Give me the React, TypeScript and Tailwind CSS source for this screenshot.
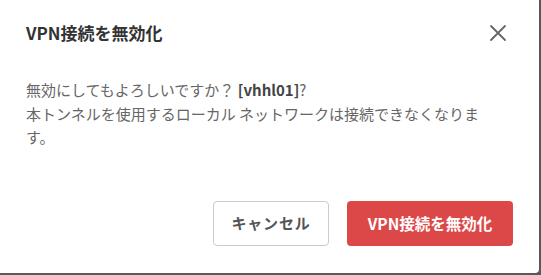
export default function App() {
  return (
    <div className="w-[541px] h-[275px] bg-[#595959] overflow-hidden" style={{ fontFamily: '"Noto Sans CJK JP", "Noto Sans", sans-serif' }}>
      <div className="w-[539px] h-[273px] bg-white rounded-br-[4px] flex flex-col">
        <div className="flex items-center justify-between pl-[26px] pr-[32px] pt-[21px] h-[45px]">
          <h1 className="text-[17px] font-bold text-[#333333] leading-[24px]">VPN接続を無効化</h1>
          <button className="text-[#666666] w-[18px] h-[18px] flex items-center justify-center">
            <svg width="18" height="18" viewBox="0 0 18 18" fill="none" stroke="currentColor" strokeWidth="1.8" strokeLinecap="round">
              <path d="M2 2 L16 16 M16 2 L2 16" />
            </svg>
          </button>
        </div>
        <div className="pl-[26px] w-[495px] pt-[33px] text-[15px] leading-[23.5px] text-[#666666]">
          <p>
            無効にしてもよろしいですか？ <span className="font-bold text-[#444444]">[vhhl01]</span>?
          </p>
          <p>本トンネルを使用するローカル ネットワークは接続できなくなります。</p>
        </div>
        <div className="flex-1" />
        <div className="flex justify-end gap-[18px] pr-[26px] pb-[27px]">
          <button className="w-[116px] h-[45px] rounded-[4px] border border-[#cccccc] bg-white text-[15px] font-bold text-[#555555] tracking-[0.8px]">
            キャンセル
          </button>
          <button className="w-[166px] h-[45px] rounded-[4px] bg-[#dc4848] text-[15.5px] font-bold text-white">
            VPN接続を無効化
          </button>
        </div>
      </div>
    </div>
  );
}
